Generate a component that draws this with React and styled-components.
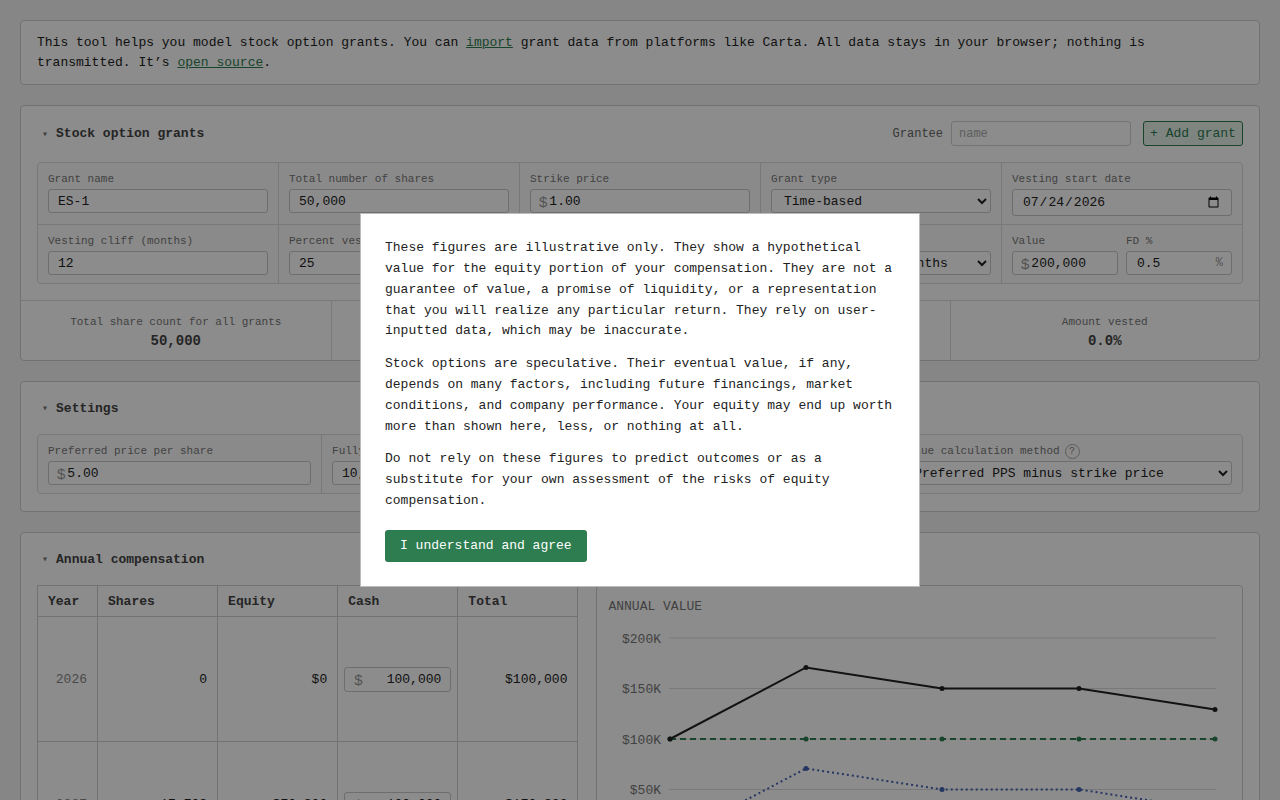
import React from "react";
import styled, { createGlobalStyle } from "styled-components";

const mono = `"Liberation Mono", "DejaVu Sans Mono", monospace`;
const green = "#2e7d50";

const GlobalStyle = createGlobalStyle`
  html, body { margin: 0; padding: 0; }
  body {
    background: #f4f4f4;
    font-family: ${mono};
    font-size: 13px;
    color: #222;
  }
  * { box-sizing: border-box; }
`;

const Page = styled.div`
  padding: 20px;
  display: flex;
  flex-direction: column;
  gap: 20px;
`;

const InfoBox = styled.div`
  background: #fff;
  border: 1px solid #cfcfcf;
  border-radius: 4px;
  padding: 12px 16px 11px;
  line-height: 20px;
  color: #222;
`;

const Link = styled.a`
  color: ${green};
  text-decoration: underline;
`;

const Card = styled.section`
  background: #fff;
  border: 1px solid #cfcfcf;
  border-radius: 4px;
`;

const CardBody = styled.div`
  padding: ${(p) => p.$pt || "15px"} 16px ${(p) => p.$pb || "16px"};
  display: flex;
  flex-direction: column;
  gap: 15px;
`;

const CardHeader = styled.div`
  display: flex;
  align-items: center;
  justify-content: space-between;
  min-height: ${(p) => p.$minH || "22px"};
`;

const Title = styled.div`
  display: flex;
  align-items: center;
  gap: 8px;
  padding-left: 5px;
  font-weight: bold;
  color: #444;
`;

const Caret = styled.span`
  font-size: 10px;
  color: #777;
  font-weight: normal;
`;

const HeaderControls = styled.div`
  display: flex;
  align-items: center;
`;

const GranteeLabel = styled.label`
  font-size: 12px;
  color: #666;
  margin-right: 8px;
`;

const GranteeInput = styled.input`
  width: 180px;
  height: 25px;
  border: 1px solid #d4d4d4;
  border-radius: 3px;
  padding: 0 7px;
  font-family: ${mono};
  font-size: 12px;
  color: #222;
  margin-right: 12px;
  &::placeholder { color: #aaa; }
`;

const AddButton = styled.button`
  height: 25px;
  width: 100px;
  padding: 0;
  border: 1px solid ${green};
  background: #e6f2ea;
  color: ${green};
  border-radius: 3px;
  font-family: ${mono};
  font-size: 13px;
`;

const FieldGrid = styled.div`
  display: grid;
  grid-template-columns: ${(p) => p.$cols};
  gap: 1px;
  background: #dcdcdc;
  border: 1px solid #dcdcdc;
  border-radius: 4px;
  overflow: hidden;
`;

const Cell = styled.div`
  background: #fcfcfc;
  padding: 10px 10px 8px;
  display: flex;
  flex-direction: ${(p) => (p.$row ? "row" : "column")};
  gap: ${(p) => (p.$row ? "8px" : "3px")};
  min-width: 0;
`;

const SubField = styled.div`
  flex: 1;
  display: flex;
  flex-direction: column;
  gap: 3px;
  min-width: 0;
`;

const Label = styled.label`
  display: flex;
  align-items: center;
  font-size: 11px;
  line-height: 13px;
  height: 13px;
  color: #777;
  white-space: nowrap;
`;

const inputBase = `
  height: 24px;
  width: 100%;
  border: 1px solid #c8c8c8;
  border-radius: 3px;
  background: #fff;
  font-family: ${mono};
  font-size: 13px;
  color: #222;
`;

const TextInput = styled.input`
  ${inputBase}
  height: ${(p) => p.$h || "24px"};
  padding: 0 9px;
`;

const Select = styled.select`
  ${inputBase}
  padding: 0 8px;
`;

const AffixBox = styled.div`
  ${inputBase}
  display: flex;
  align-items: center;
  padding: 0 8px;
  gap: 2px;
`;

const Affix = styled.span`
  color: #999;
  font-size: 15px;
  font-family: "Liberation Sans", Arial, sans-serif;
`;

const Suffix = styled.span`
  color: #999;
  font-size: 12px;
  font-family: ${mono};
`;

const BareInput = styled.input`
  flex: 1;
  min-width: 0;
  border: none;
  outline: none;
  background: transparent;
  font-family: ${mono};
  font-size: 13px;
  color: #222;
  padding: 0 0 0 ${(p) => p.$pl || "0px"};
  text-align: ${(p) => p.$align || "left"};
`;

const HelpIcon = styled.span`
  display: inline-flex;
  align-items: center;
  justify-content: center;
  width: 15px;
  height: 15px;
  margin-left: 5px;
  border: 1px solid #aaa;
  border-radius: 50%;
  font-size: 10px;
  color: #888;
`;

const SummaryRow = styled.div`
  display: grid;
  grid-template-columns: repeat(4, 1fr);
  border-top: 1px solid #dcdcdc;
`;

const SummaryCell = styled.div`
  padding: 14px 10px 10px;
  text-align: center;
  display: flex;
  flex-direction: column;
  gap: 3px;
  & + & { border-left: 1px solid #dcdcdc; }
`;

const SummaryLabel = styled.div`
  font-size: 11px;
  line-height: 14px;
  color: #777;
`;

const SummaryValue = styled.div`
  font-size: 14px;
  line-height: 18px;
  font-weight: bold;
  color: #444;
`;

const CompGrid = styled.div`
  display: grid;
  grid-template-columns: minmax(0, 541fr) minmax(0, 646fr);
  gap: 18px;
  align-items: start;
`;

const Table = styled.table`
  width: 100%;
  border-collapse: collapse;
  border: 1px solid #cfcfcf;
  table-layout: fixed;
`;

const Th = styled.th`
  width: ${(p) => p.$w};
  height: 31px;
  padding: 0 10px;
  text-align: left;
  font-weight: bold;
  color: #444;
  border: 1px solid #cfcfcf;
`;

const Td = styled.td`
  height: 125px;
  padding: 0 ${(p) => (p.$tight ? "6px" : "10px")};
  text-align: right;
  border: 1px solid #cfcfcf;
  color: ${(p) => (p.$muted ? "#888" : "#222")};
`;

const CashBox = styled(AffixBox)`
  height: 25px;
  padding: 0 9px;
`;

const ChartPanel = styled.div`
  border: 1px solid #cfcfcf;
  border-radius: 4px;
  padding: 13px 11px 12px;
  height: 656px;
`;

const ChartTitle = styled.div`
  font-size: 13px;
  line-height: 16px;
  color: #777;
  text-transform: uppercase;
  margin-bottom: 6px;
`;

const Overlay = styled.div`
  position: fixed;
  inset: 0;
  background: rgba(0, 0, 0, 0.45);
  display: flex;
  align-items: center;
  justify-content: center;
`;

const Modal = styled.div`
  width: 560px;
  background: #fff;
  border: 1px solid #bbb;
  padding: 24px;
`;

const ModalText = styled.p`
  margin: 0 0 12px;
  line-height: 20.8px;
  color: #222;
`;

const AgreeButton = styled.button`
  margin-top: 6px;
  height: 32px;
  padding: 0 15px;
  background: ${green};
  color: #fff;
  border: none;
  border-radius: 3px;
  font-family: ${mono};
  font-size: 13px;
`;

const years = [
  { year: 2026, shares: "0", equity: "$0", total: "$100,000", e: 0, t: 100 },
  { year: 2027, shares: "17,708", equity: "$70,833", total: "$170,833", e: 70.833, t: 170.833 },
  { year: 2028, shares: "12,500", equity: "$50,000", total: "$150,000", e: 50, t: 150 },
  { year: 2029, shares: "12,500", equity: "$50,000", total: "$150,000", e: 50, t: 150 },
  { year: 2030, shares: "7,292", equity: "$29,167", total: "$129,167", e: 29.167, t: 129.167 },
];

const xs = [62, 198, 334, 471, 607];
const yOf = (k) => 17 + (200 - k) * 1.01;

function Chart() {
  const pts = (key) => years.map((d, i) => `${xs[i]},${yOf(key(d))}`).join(" ");
  return (
    <svg width="622" height="300" viewBox="0 0 622 300">
      {[200, 150, 100, 50, 0].map((v) => (
        <g key={v}>
          <line x1="61" x2="608" y1={yOf(v)} y2={yOf(v)} stroke="#ddd" strokeWidth="1" />
          <text
            x="53"
            y={yOf(v) + 4.5}
            textAnchor="end"
            fontFamily={mono}
            fontSize="13"
            fill="#777"
          >
            {v === 0 ? "$0" : `$${v}K`}
          </text>
        </g>
      ))}
      <polyline points={pts(() => 100)} fill="none" stroke={green} strokeWidth="2" strokeDasharray="6 4" />
      {xs.map((x) => (
        <circle key={`c${x}`} cx={x} cy={yOf(100)} r="2.5" fill={green} />
      ))}
      <polyline points={pts((d) => d.e)} fill="none" stroke="#4463b3" strokeWidth="2" strokeDasharray="2 3" />
      {years.map((d, i) => (
        <circle key={`e${i}`} cx={xs[i]} cy={yOf(d.e)} r="2.5" fill="#4463b3" />
      ))}
      <polyline points={pts((d) => d.t)} fill="none" stroke="#222" strokeWidth="2" />
      {years.map((d, i) => (
        <circle key={`t${i}`} cx={xs[i]} cy={yOf(d.t)} r="2.5" fill="#222" />
      ))}
      {years.map((d, i) => (
        <text key={`y${i}`} x={xs[i]} y="250" textAnchor="middle" fontFamily={mono} fontSize="13" fill="#777">
          {d.year}
        </text>
      ))}
    </svg>
  );
}

function Field({ label, children }) {
  return (
    <Cell>
      <Label>{label}</Label>
      {children}
    </Cell>
  );
}

export default function App() {
  return (
    <>
      <GlobalStyle />
      <Page>
        <InfoBox>
          This tool helps you model stock option grants. You can <Link href="#">import</Link> grant data
          from platforms like Carta. All data stays in your browser; nothing is transmitted. It’s{" "}
          <Link href="#">open source</Link>.
        </InfoBox>

        <Card>
          <CardBody $pt="14px">
            <CardHeader $minH="27px">
              <Title>
                <Caret>▾</Caret>Stock option grants
              </Title>
              <HeaderControls>
                <GranteeLabel>Grantee</GranteeLabel>
                <GranteeInput placeholder="name" />
                <AddButton>+ Add grant</AddButton>
              </HeaderControls>
            </CardHeader>
            <FieldGrid $cols="repeat(5, minmax(0, 1fr))">
              <Field label="Grant name">
                <TextInput defaultValue="ES-1" />
              </Field>
              <Field label="Total number of shares">
                <TextInput defaultValue="50,000" />
              </Field>
              <Field label="Strike price">
                <AffixBox>
                  <Affix>$</Affix>
                  <BareInput defaultValue="1.00" />
                </AffixBox>
              </Field>
              <Field label="Grant type">
                <Select defaultValue="time">
                  <option value="time">Time-based</option>
                  <option value="milestone">Milestone</option>
                </Select>
              </Field>
              <Field label="Vesting start date">
                <TextInput type="date" $h="27px" defaultValue="2026-07-24" />
              </Field>
              <Field label="Vesting cliff (months)">
                <TextInput defaultValue="12" />
              </Field>
              <Field label="Percent vested at cliff">
                <TextInput defaultValue="25" />
              </Field>
              <Field label="Vesting period (months)">
                <TextInput defaultValue="48" />
              </Field>
              <Field label="Vesting schedule">
                <Select defaultValue="m">
                  <option value="m">Monthly for 48 months</option>
                </Select>
              </Field>
              <Cell $row>
                <SubField>
                  <Label>Value</Label>
                  <AffixBox>
                    <Affix>$</Affix>
                    <BareInput defaultValue="200,000" />
                  </AffixBox>
                </SubField>
                <SubField>
                  <Label>FD %</Label>
                  <AffixBox>
                    <BareInput $pl="2px" defaultValue="0.5" />
                    <Suffix>%</Suffix>
                  </AffixBox>
                </SubField>
              </Cell>
            </FieldGrid>
          </CardBody>
          <SummaryRow>
            <SummaryCell>
              <SummaryLabel>Total share count for all grants</SummaryLabel>
              <SummaryValue>50,000</SummaryValue>
            </SummaryCell>
            <SummaryCell>
              <SummaryLabel>Total value of all grants</SummaryLabel>
              <SummaryValue>$200,000</SummaryValue>
            </SummaryCell>
            <SummaryCell>
              <SummaryLabel>Shares vested</SummaryLabel>
              <SummaryValue>0</SummaryValue>
            </SummaryCell>
            <SummaryCell>
              <SummaryLabel>Amount vested</SummaryLabel>
              <SummaryValue>0.0%</SummaryValue>
            </SummaryCell>
          </SummaryRow>
        </Card>

        <Card>
          <CardBody $pb="17px">
            <CardHeader>
              <Title>
                <Caret>▾</Caret>Settings
              </Title>
            </CardHeader>
            <FieldGrid $cols="minmax(0, 284fr) minmax(0, 284fr) minmax(0, 285fr) minmax(0, 352fr)">
              <Field label="Preferred price per share">
                <AffixBox>
                  <Affix>$</Affix>
                  <BareInput defaultValue="5.00" />
                </AffixBox>
              </Field>
              <Field label="Fully diluted shares">
                <TextInput defaultValue="10,000,000" />
              </Field>
              <Field label="Years to show">
                <TextInput defaultValue="5" />
              </Field>
              <Field
                label={
                  <>
                    Value calculation method<HelpIcon>?</HelpIcon>
                  </>
                }
              >
                <Select defaultValue="pps">
                  <option value="pps">Preferred PPS minus strike price</option>
                </Select>
              </Field>
            </FieldGrid>
          </CardBody>
        </Card>

        <Card>
          <CardBody>
            <CardHeader>
              <Title>
                <Caret>▾</Caret>Annual compensation
              </Title>
            </CardHeader>
            <CompGrid>
              <Table>
                <thead>
                  <tr>
                    <Th $w="60px">Year</Th>
                    <Th>Shares</Th>
                    <Th>Equity</Th>
                    <Th>Cash</Th>
                    <Th>Total</Th>
                  </tr>
                </thead>
                <tbody>
                  {years.map((d) => (
                    <tr key={d.year}>
                      <Td $muted>{d.year}</Td>
                      <Td>{d.shares}</Td>
                      <Td>{d.equity}</Td>
                      <Td $tight>
                        <CashBox>
                          <Affix>$</Affix>
                          <BareInput $align="right" defaultValue="100,000" />
                        </CashBox>
                      </Td>
                      <Td>{d.total}</Td>
                    </tr>
                  ))}
                </tbody>
              </Table>
              <ChartPanel>
                <ChartTitle>Annual value</ChartTitle>
                <Chart />
              </ChartPanel>
            </CompGrid>
          </CardBody>
        </Card>
      </Page>

      <Overlay>
        <Modal>
          <ModalText>
            These figures are illustrative only. They show a hypothetical value for the equity portion of
            your compensation. They are not a guarantee of value, a promise of liquidity, or a
            representation that you will realize any particular return. They rely on user-inputted data,
            which may be inaccurate.
          </ModalText>
          <ModalText>
            Stock options are speculative. Their eventual value, if any, depends on many factors, including
            future financings, market conditions, and company performance. Your equity may end up worth more
            than shown here, less, or nothing at all.
          </ModalText>
          <ModalText>
            Do not rely on these figures to predict outcomes or as a substitute for your own assessment of
            the risks of equity compensation.
          </ModalText>
          <AgreeButton>I understand and agree</AgreeButton>
        </Modal>
      </Overlay>
    </>
  );
}
